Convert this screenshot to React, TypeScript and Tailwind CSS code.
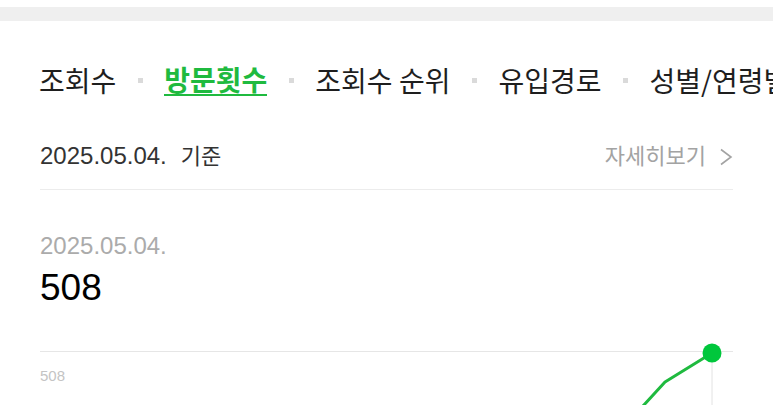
const tabs = ["조회수", "방문횟수", "조회수 순위", "유입경로", "성별/연령별"];

function Chevron() {
  return (
    <svg width="15" height="18" viewBox="0 0 15 18" className="ml-[12px]">
      <polyline points="3,1.5 13,9 3,16.5" fill="none" stroke="#a3a3a3" strokeWidth="1.6" />
    </svg>
  );
}

function Chart() {
  return (
    <div className="relative mt-[41px] border-t border-[#e6e6e6]">
      <div className="pt-[15px] text-[15px] leading-[18px] text-[#c4c4c4]">508</div>
      <svg
        className="absolute left-0 top-[-12px]"
        width="693"
        height="80"
        viewBox="0 -12 693 80"
      >
        <line x1="672" y1="0" x2="672" y2="80" stroke="#e2e2e2" strokeWidth="1" />
        <polyline
          points="672,1 625,30 603,54 590,68"
          fill="none"
          stroke="#1fba3f"
          strokeWidth="3"
          strokeLinejoin="round"
        />
        <circle cx="672" cy="1" r="9.5" fill="#00c73c" />
      </svg>
    </div>
  );
}

export default function App() {
  return (
    <div
      className="h-[405px] w-[773px] overflow-hidden bg-white"
      style={{ fontFamily: '"Liberation Sans", "Noto Sans CJK KR", sans-serif' }}
    >
      <div className="mt-[7px] h-[14px] bg-[#efefef]" />

      <nav
        className="mt-[43px] flex items-center gap-[22px] whitespace-nowrap pl-[39px] text-[28px] leading-[30px] text-[#1e1e1e]"
        style={{ fontFamily: '"Noto Sans CJK KR", sans-serif' }}
      >
        {tabs.map((t, i) => (
          <div key={t} className="flex shrink-0 items-center gap-[21px]">
            {i > 0 && <span className="h-[5px] w-[5px] shrink-0 bg-[#dadada]" />}
            {i === 1 ? (
              <span className="border-b-2 border-[#1fba3f] font-bold text-[#1fba3f]">{t}</span>
            ) : (
              <span>{t}</span>
            )}
          </div>
        ))}
      </nav>

      <main className="mx-[40px] w-[693px]">
        <div className="mt-[46px] flex items-center justify-between border-b border-[#ececec] pb-[18px]">
          <span className="text-[24px] leading-[28px] text-[#333]">
            2025.05.04.<span className="ml-[14px] text-[22px]">기준</span>
          </span>
          <span className="flex items-center text-[22px] leading-[28px] text-[#a3a3a3]">
            자세히보기
            <Chevron />
          </span>
        </div>

        <div className="mt-[42px] text-[24px] leading-[28px] text-[#ababab]">2025.05.04.</div>
        <div className="mt-[6px] text-[37px] leading-[44px] text-black">508</div>

        <Chart />
      </main>
    </div>
  );
}
